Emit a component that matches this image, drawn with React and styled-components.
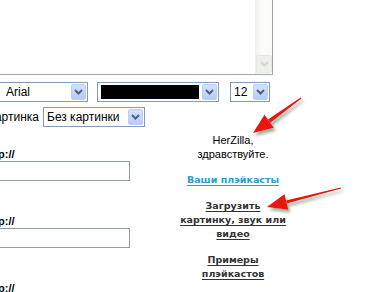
import React from "react";
import styled, { createGlobalStyle } from "styled-components";

const GlobalStyle = createGlobalStyle`
    html, body {
        margin: 0;
        padding: 0;
        background: #fff;
    }
    body {
        font-family: "Liberation Sans", Arial, sans-serif;
        font-size: 11px;
        color: #000;
    }
`;

function Chevron({ color }) {
    return (
        <svg width="9" height="6" viewBox="0 0 9 6">
            <path d="M1 1 L4.5 4.5 L8 1" fill="none" stroke={color} strokeWidth="2" />
        </svg>
    );
}

function Select({ width, lead, children }) {
    return (
        <SelectBox $width={width} $lead={lead}>
            <SelectValue>{children}</SelectValue>
            <DropButton>
                <Chevron color="#4d6185" />
            </DropButton>
        </SelectBox>
    );
}

function Field() {
    return (
        <FieldBox>
            <FieldLabel>http://</FieldLabel>
            <TextInput />
        </FieldBox>
    );
}

function Arrows() {
    return (
        <Overlay width="368" height="292" viewBox="0 0 368 292">
            <defs>
                <filter id="shade" x="-20%" y="-20%" width="140%" height="160%">
                    <feDropShadow dx="2" dy="3" stdDeviation="1.6" floodColor="#8a9a80" floodOpacity="0.8" />
                </filter>
            </defs>
            <g fill="#e8120c" filter="url(#shade)">
                <polygon points="301.4,98.6 300.6,97.4 268,119.6 270.4,122.8" />
                <polygon points="253,133 273.9,127.7 264.5,114.7" />
                <polygon points="341.15,188.6 340.85,187.4 286,200.5 286.8,203.5" />
                <polygon points="267,207 288.4,209.8 284.4,194.2" />
            </g>
        </Overlay>
    );
}

function App() {
    return (
        <>
            <GlobalStyle />
            <Page>
                <Content>
                    <Editor>
                        <ScrollTrack>
                            <ScrollButton>
                                <Chevron color="#d6dcd0" />
                            </ScrollButton>
                        </ScrollTrack>
                    </Editor>
                    <ToolRow>
                        <Select width={89} lead={6}>Arial</Select>
                        <Select width={122}>
                            <ColorSwatch />
                        </Select>
                        <Select width={40}>12</Select>
                    </ToolRow>
                    <PictureRow>
                        <PictureLabel>Картинка</PictureLabel>
                        <Select width={102}>Без картинки</Select>
                    </PictureRow>
                    <Lower>
                        <FormColumn>
                            <Field />
                            <Field />
                            <Field />
                        </FormColumn>
                        <Sidebar>
                            <Greeting>
                                HerZilla,
                                <br />
                                здравствуйте.
                            </Greeting>
                            <SideLink $blue>Ваши плэйкасты</SideLink>
                            <SideLink>
                                Загрузить
                                <br />
                                картинку, звук или
                                <br />
                                видео
                            </SideLink>
                            <SideLink>
                                Примеры
                                <br />
                                плэйкастов
                            </SideLink>
                            <SideLink>Архив</SideLink>
                        </Sidebar>
                    </Lower>
                </Content>
                <Arrows />
            </Page>
        </>
    );
}

const Page = styled.div`
    position: relative;
    width: 368px;
    height: 292px;
    overflow: hidden;
`;
const Content = styled.div`
    margin-left: -40px;
    width: 400px;
`;
const Editor = styled.div`
    position: relative;
    width: 311px;
    height: 92px;
    margin-top: -19px;
    border: 1px solid #9ea6b4;
    background: #fff;
    display: flex;
    justify-content: flex-end;
`;
const ScrollTrack = styled.div`
    width: 16px;
    background: linear-gradient(to right, #f3f3ee, #fefef8 40%, #fbfbf3);
    border-left: 1px solid #f0f0ea;
    display: flex;
    flex-direction: column;
    justify-content: flex-end;
`;
const ScrollButton = styled.div`
    height: 16px;
    margin-bottom: 1px;
    background: #eef0ea;
    border: 1px solid #e6e9e2;
    border-radius: 2px;
    display: flex;
    align-items: center;
    justify-content: center;
`;
const ToolRow = styled.div`
    display: flex;
    gap: 9px;
    margin-top: 7px;
    padding-left: 39px;
    & > :last-child {
        margin-left: 2px;
    }
`;
const SelectBox = styled.div`
    width: ${(p) => p.$width}px;
    height: 20px;
    box-sizing: border-box;
    border: 1px solid #7f9db9;
    background: #fff;
    display: flex;
    align-items: center;
    padding: 0 1px 0 ${(p) => p.$lead || 3}px;
`;
const SelectValue = styled.div`
    flex: 1;
    display: flex;
    align-items: center;
    font-size: 12px;
    color: #000;
    white-space: nowrap;
    overflow: hidden;
`;
const ColorSwatch = styled.div`
    width: 100%;
    height: 14px;
    margin-right: 3px;
    background: #000;
`;
const DropButton = styled.div`
    width: 15px;
    height: 16px;
    box-sizing: border-box;
    border: 1px solid #b9cdf5;
    border-radius: 2px;
    background: linear-gradient(#d4e2fc, #b7cbf6);
    display: flex;
    align-items: center;
    justify-content: center;
`;
const PictureRow = styled.div`
    display: flex;
    align-items: center;
    gap: 4px;
    margin-top: 5px;
`;
const PictureLabel = styled.div`
    width: 79px;
    text-align: right;
    font-size: 12px;
`;
const Lower = styled.div`
    display: flex;
`;
const FormColumn = styled.div`
    width: 213px;
    padding-top: 20px;
`;
const FieldBox = styled.div`
    margin-bottom: 33px;
`;
const FieldLabel = styled.div`
    padding-left: 24px;
    line-height: 14px;
    font-weight: bold;
    font-size: 11px;
`;
const TextInput = styled.div`
    width: 150px;
    height: 20px;
    box-sizing: border-box;
    margin-left: 20px;
    border: 1px solid #8e9aa6;
    background: #fff;
`;
const Sidebar = styled.div`
    width: 120px;
    padding-top: 6px;
    text-align: center;
    display: flex;
    flex-direction: column;
    gap: 12px;
`;
const Greeting = styled.div`
    line-height: 14px;
    font-size: 11px;
`;
const SideLink = styled.a`
    display: block;
    line-height: 14px;
    font-family: "DejaVu Sans", Verdana, sans-serif;
    font-weight: bold;
    font-size: 9.5px;
    color: ${(p) => (p.$blue ? "#2d9bd3" : "#333")};
    text-decoration: underline;
    text-decoration-thickness: 1px;
    text-underline-offset: 2px;
`;
const Overlay = styled.svg`
    position: absolute;
    left: 0;
    top: 0;
    pointer-events: none;
`;

export default App;
